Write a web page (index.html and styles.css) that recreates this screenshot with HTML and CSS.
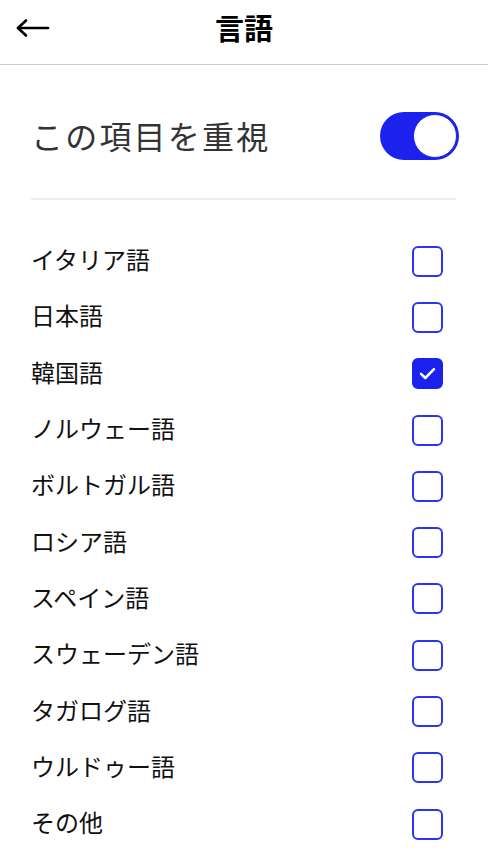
FILE: index.html
```html
<!DOCTYPE html>
<html lang="ja">
<head>
<meta charset="utf-8">
<title>言語</title>
<link rel="stylesheet" href="styles.css">
</head>
<body>
<div class="page">
  <header class="header">
    <button class="back" aria-label="戻る">
      <svg width="34" height="20" viewBox="0 0 34 20" fill="none" stroke="#000" stroke-width="2.6" stroke-linecap="round" stroke-linejoin="round">
        <path d="M2 10 H32"/>
        <path d="M10 2.5 L2 10 L10 17.5"/>
      </svg>
    </button>
    <h1 class="title">言語</h1>
  </header>

  <section class="priority">
    <span class="priority-label">この項目を重視</span>
    <span class="toggle on"><span class="knob"></span></span>
  </section>
  <div class="divider"></div>

  <ul class="list">
    <li class="row"><span class="label">イタリア語</span><span class="check"></span></li>
    <li class="row"><span class="label">日本語</span><span class="check"></span></li>
    <li class="row"><span class="label">韓国語</span><span class="check checked"><svg width="17" height="13" viewBox="0 0 17 13" fill="none" stroke="#fff" stroke-width="2.5" stroke-linecap="round" stroke-linejoin="round"><path d="M2 6.8 L6.3 11 L15 2.2"/></svg></span></li>
    <li class="row"><span class="label">ノルウェー語</span><span class="check"></span></li>
    <li class="row"><span class="label">ボルトガル語</span><span class="check"></span></li>
    <li class="row"><span class="label">ロシア語</span><span class="check"></span></li>
    <li class="row"><span class="label">スペイン語</span><span class="check"></span></li>
    <li class="row"><span class="label">スウェーデン語</span><span class="check"></span></li>
    <li class="row"><span class="label">タガログ語</span><span class="check"></span></li>
    <li class="row"><span class="label">ウルドゥー語</span><span class="check"></span></li>
    <li class="row"><span class="label">その他</span><span class="check"></span></li>
  </ul>
</div>
</body>
</html>
```

FILE: styles.css
```css
* { box-sizing: border-box; }
html, body {
  margin: 0;
  padding: 0;
  background: #fff;
}
body {
  font-family: "Noto Sans CJK JP", "Noto Sans", sans-serif;
  color: #111;
}
.page {
  width: 488px;
  height: 860px;
  overflow: hidden;
}
.header {
  position: relative;
  height: 65px;
  border-bottom: 1px solid #c9c9c9;
  display: flex;
  align-items: center;
  justify-content: center;
}
.back {
  position: absolute;
  left: 16px;
  top: 18px;
  border: 0;
  background: none;
  padding: 0;
  display: flex;
}
.title {
  margin: 0 0 10px;
  font-size: 29px;
  font-weight: 700;
  line-height: 1;
  color: #000;
}
.priority {
  display: flex;
  align-items: center;
  justify-content: space-between;
  height: 133px;
  padding: 47px 29px 38px 31px;
}
.priority-label {
  font-size: 32px;
  letter-spacing: 2.2px;
  color: #333;
  line-height: 44px;
  margin-bottom: 2px;
}
.toggle {
  position: relative;
  width: 79px;
  height: 48px;
  border-radius: 24px;
  background: #1b22ee;
  flex: none;
}
.knob {
  position: absolute;
  right: 2px;
  top: 2px;
  width: 44px;
  height: 44px;
  border-radius: 50%;
  background: #fff;
  border: 1px solid #1b22ee;
}
.divider {
  height: 2px;
  margin: 0 32px 0 31px;
  background: #ededed;
}
.list {
  list-style: none;
  margin: 0;
  padding: 33px 45px 0 31px;
}
.row {
  height: 56.3px;
  display: flex;
  align-items: center;
  justify-content: space-between;
}
.label {
  font-size: 24px;
  line-height: 1;
  color: #111;
  margin-bottom: 4px;
}
.check {
  width: 31px;
  height: 31px;
  border: 2px solid #2b35f0;
  border-radius: 6px;
  display: flex;
  align-items: center;
  justify-content: center;
  flex: none;
}
.check.checked {
  background: #1b22ee;
  border-color: #1b22ee;
}
```
